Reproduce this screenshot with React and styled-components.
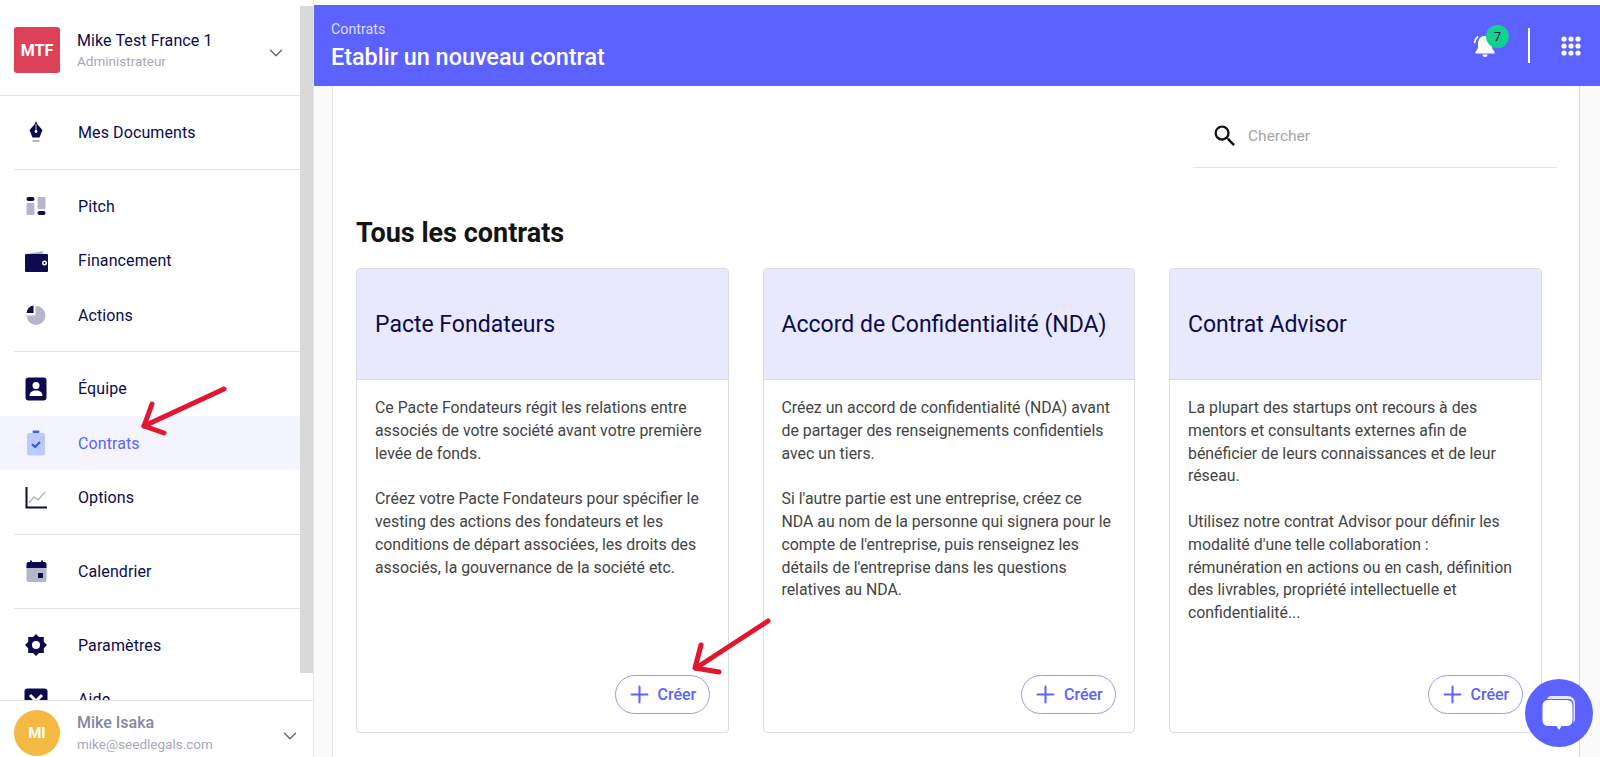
import React from "react";
import styled, { createGlobalStyle } from "styled-components";
import { ChevronDown, Plus } from "lucide-react";
import { MdSearch } from "react-icons/md";

const Global = createGlobalStyle`
  html, body { margin: 0; padding: 0; height: 100%; overflow: hidden; background: #fff; }
  body { font-family: Roboto, "Liberation Sans", sans-serif; }
  #root { height: 100%; }
  * { box-sizing: border-box; }
`;

const navy = "#0b0b4d";
const brand = "#5c62ff";

/* page */
const Page = styled.div`
  position: relative;
  display: flex;
  width: 1600px;
  height: 757px;
  overflow: hidden;
`;

/* sidebar */
const Sidebar = styled.aside`
  width: 314px;
  flex: none;
  height: 757px;
  display: flex;
  flex-direction: column;
  border-right: 1px solid #e6e6e6;
`;
const SideBody = styled.div`
  flex: 1;
  min-height: 0;
  display: flex;
  overflow: hidden;
`;
const SideMenu = styled.div`
  width: 300px;
  flex: none;
`;
const ScrollTrack = styled.div`
  width: 13px;
  flex: none;
  padding-top: 6px;
`;
const ScrollThumb = styled.div`
  height: 667px;
  background: #d9d9d9;
`;
const Account = styled.div`
  height: 96px;
  display: flex;
  align-items: center;
  padding: 5px 13px 0 14px;
  border-bottom: 1px solid #e4e4e8;
`;
const CompanyLogo = styled.div`
  width: 46px;
  height: 46px;
  flex: none;
  margin-right: 17px;
  border-radius: 3px;
  background: #dc4157;
  color: #fff;
  font-size: 16px;
  font-weight: 700;
  display: flex;
  align-items: center;
  justify-content: center;
`;
const AccountText = styled.div`
  flex: 1;
  min-width: 0;
`;
const AccountName = styled.div`
  margin-top: 2px;
  font-size: 16px;
  line-height: 20px;
  letter-spacing: 0.1px;
  color: ${navy};
`;
const AccountRole = styled.div`
  font-size: 13.5px;
  line-height: 20px;
  color: #a6a8ba;
`;
const Caret = styled(ChevronDown)`
  flex: none;
  margin-top: 6px;
`;
const Group = styled.div`
  margin-left: 14px;
  padding: 9.1px 0;
  border-bottom: ${(p) => (p.$last ? "none" : "1px solid #e2e2e6")};
`;
const Row = styled.div`
  height: 54.5px;
  margin-left: -14px;
  padding-left: 24px;
  display: flex;
  align-items: center;
  background: ${(p) => (p.$active ? "#f4f4fe" : "transparent")};
`;
const RowIcon = styled.span`
  width: 24px;
  height: 24px;
  flex: none;
  margin-right: 30px;
  display: flex;
  align-items: center;
  justify-content: center;
`;
const RowLabel = styled.span`
  font-size: 16px;
  letter-spacing: 0.1px;
  color: ${(p) => (p.$active ? brand : navy)};
`;
const Footer = styled.div`
  height: 57px;
  flex: none;
  display: flex;
  align-items: center;
  padding: 8px 12px 0 14px;
  background: #fff;
  border-top: 1px solid #e4e4e8;
`;
const Avatar = styled.div`
  width: 46px;
  height: 46px;
  flex: none;
  margin-right: 17px;
  border-radius: 50%;
  background: #f4b942;
  color: #fff;
  font-size: 15px;
  font-weight: 700;
  display: flex;
  align-items: center;
  justify-content: center;
`;
const UserName = styled.div`
  margin-top: 1px;
  font-size: 16px;
  line-height: 20px;
  font-weight: 500;
  color: #85879f;
`;
const UserMail = styled.div`
  font-size: 13.5px;
  line-height: 20px;
  margin-top: 1px;
  color: #a6a8ba;
`;

/* main */
const Main = styled.main`
  flex: 1;
  min-width: 0;
  padding-top: 5px;
  display: flex;
  flex-direction: column;
  background: #fafafa;
`;
const Header = styled.header`
  height: 81px;
  flex: none;
  display: flex;
  align-items: center;
  justify-content: space-between;
  padding: 0 19px 0 17px;
  background: ${brand};
  color: #fff;
`;
const Crumb = styled.div`
  font-size: 14.3px;
  line-height: 18px;
  color: #dcdcff;
`;
const PageTitle = styled.div`
  margin-top: 5px;
  font-size: 23.4px;
  line-height: 28px;
  font-weight: 500;
`;
const HeaderActions = styled.div`
  display: flex;
  align-items: center;
`;
const Bell = styled.div`
  position: relative;
  width: 26px;
  height: 26px;
`;
const Badge = styled.span`
  position: absolute;
  top: -8px;
  left: 14px;
  width: 23px;
  height: 23px;
  border-radius: 50%;
  background: #12d18e;
  color: #12124a;
  font-size: 12.5px;
  display: flex;
  align-items: center;
  justify-content: center;
`;
const HeaderRule = styled.div`
  width: 2px;
  height: 35px;
  margin: 0 31px 0 30px;
  background: #fff;
`;
const Panel = styled.div`
  flex: 1;
  min-height: 0;
  margin: 0 20px 0 18px;
  padding: 0 37px 0 23px;
  background: #fff;
  border-left: 1px solid #e2e2e2;
  border-right: 1px solid #d8d8d8;
`;
const SearchRow = styled.div`
  display: flex;
  justify-content: flex-end;
  margin-right: -15px;
`;
const SearchBox = styled.div`
  width: 364px;
  height: 82px;
  padding: 18px 0 0 18px;
  display: flex;
  align-items: center;
  gap: 9px;
  border-bottom: 1px solid #e4e4e4;
  color: #a6a6a6;
  font-size: 15.5px;
`;
const Heading = styled.h1`
  margin: 49px 0 18px;
  font-size: 27px;
  line-height: 33px;
  font-weight: 700;
  color: #141414;
`;
const Cards = styled.div`
  display: grid;
  grid-template-columns: repeat(3, 372.5px);
  column-gap: 34px;
`;
const Card = styled.article`
  height: 465px;
  display: flex;
  flex-direction: column;
  border: 1px solid #dcdce4;
  border-radius: 4px;
  overflow: hidden;
`;
const CardHead = styled.div`
  height: 111px;
  flex: none;
  display: flex;
  align-items: center;
  padding: 0 18px;
  background: #e9e9fd;
  border-bottom: 1px solid #d9d9ee;
  color: ${navy};
  font-size: 23px;
`;
const CardBody = styled.div`
  flex: 1;
  padding: 17px 21px 0 18px;
  color: #444;
  font-size: 15.85px;
  line-height: 22.8px;
`;
const Para = styled.p`
  margin: 0 0 22.8px;
`;
const CardFoot = styled.div`
  display: flex;
  justify-content: flex-end;
  padding: 0 18px 18px;
`;
const CreateButton = styled.button`
  height: 39px;
  width: 95px;
  padding: 0 0 0 10px;
  display: flex;
  align-items: center;
  gap: 5px;
  border: 1px solid #9a9cec;
  border-radius: 20px;
  background: #fff;
  color: ${brand};
  font-family: inherit;
  font-size: 16px;
  font-weight: 500;
`;

/* overlays */
const Arrow = styled.svg`
  position: absolute;
  left: 0;
  top: 0;
  pointer-events: none;
`;
const ChatBubble = styled.div`
  position: absolute;
  left: 1525px;
  top: 679px;
  width: 68px;
  height: 68px;
  border-radius: 50%;
  background: ${brand};
  display: flex;
  align-items: center;
  justify-content: center;
`;

/* icons */
const PenIcon = () => (
  <svg width="16" height="24" viewBox="0 0 16 24">
    <path d="M8 1l1.500 3.500 5 5.500-3 7.500H4.500l-3-7.500 5-5.500z" fill={navy} />
    <circle cx="8" cy="11.500" r="1.400" fill="#fff" />
    <path d="M8 4v7" stroke="#fff" strokeWidth=".8" />
    <rect x="4.500" y="20" width="7" height="2" fill="#b4b6c9" />
  </svg>
);
const PitchIcon = () => (
  <svg width="20" height="20" viewBox="0 0 20 20">
    <rect x="0.500" y="1" width="8" height="4" rx="2" fill={navy} />
    <rect x="0.500" y="7" width="8" height="12" rx="1" fill="#b4b6c9" />
    <rect x="11.500" y="1" width="8" height="12" rx="1" fill="#b4b6c9" />
    <rect x="11.500" y="15" width="8" height="4" rx="2" fill={navy} />
  </svg>
);
const WalletIcon = () => (
  <svg width="24" height="24" viewBox="0 0 24 24">
    <path d="M3 5l16-3v3z" fill="#b4b6c9" />
    <path d="M1 6a1 1 0 0 1 1-1h21a1 1 0 0 1 1 1v16a1 1 0 0 1-1 1H2a1 1 0 0 1-1-1z" fill={navy} />
    <circle cx="20.500" cy="14" r="2.500" fill="#fff" />
    <circle cx="20.500" cy="14" r="1" fill={navy} />
  </svg>
);
const PieIcon = () => (
  <svg width="20" height="20" viewBox="0 0 20 20">
    <path d="M9 1a9.500 9.500 0 1 1-8.500 9.500H9.500V1z" fill="#b4b6c9" />
    <path d="M7.500 0.500V8H0.500A8 8 0 0 1 7.500 0.500z" fill={navy} />
  </svg>
);
const TeamIcon = () => (
  <svg width="22" height="24" viewBox="0 0 22 24">
    <rect x="0.500" y="0.500" width="21" height="23" rx="3" fill={navy} />
    <circle cx="11" cy="8.500" r="3.500" fill="#fff" />
    <path d="M4.500 19c0-4 3-5.500 6.500-5.500s6.500 1.500 6.500 5.500z" fill="#fff" />
  </svg>
);
const ClipboardIcon = () => (
  <svg width="20" height="26" viewBox="0 0 20 26">
    <rect x="1" y="3" width="18" height="22.500" rx="2" fill="#bccbff" />
    <rect x="6.500" y="0.500" width="7" height="2.500" rx="1" fill="#3f5ff0" />
    <path d="M6 14l3 3 5-5" fill="none" stroke="#3050e8" strokeWidth="2" />
  </svg>
);
const ChartIcon = () => (
  <svg width="22" height="22" viewBox="0 0 22 22">
    <path d="M1.500 0v20.500H22" fill="none" stroke={navy} strokeWidth="2" />
    <path d="M4 16l5-6 4 3 7-8" fill="none" stroke="#b4b6c9" strokeWidth="1.500" />
  </svg>
);
const CalendarIcon = () => (
  <svg width="21" height="22" viewBox="0 0 21 22">
    <rect x="0.500" y="4" width="20" height="18" rx="2" fill="#b4b6c9" />
    <path d="M0.500 8V4a2 2 0 0 1 2-2h16a2 2 0 0 1 2 2v4z" fill={navy} />
    <rect x="4" y="0.500" width="2" height="3" fill={navy} />
    <rect x="15" y="0.500" width="2" height="3" fill={navy} />
    <rect x="12" y="13" width="5" height="5" rx="0.500" fill={navy} />
  </svg>
);
const GearIcon = () => (
  <svg width="22" height="22" viewBox="0 0 22 22">
    <path
      d="M11 0l3 3h4.800v4.800L22 11l-3.200 3.200V19H14l-3 3-3-3H3.200v-4.800L0 11l3.200-3.200V3H8z"
      fill={navy}
    />
    <circle cx="11" cy="11" r="4" fill="#fff" />
  </svg>
);
const HelpIcon = () => (
  <svg width="24" height="24" viewBox="0 0 24 24">
    <rect x="0.500" y="0.500" width="23" height="23" rx="3" fill={navy} />
    <path d="M6 7l6 6 6-6" fill="none" stroke="#fff" strokeWidth="3" />
  </svg>
);
const BellIcon = () => (
  <svg width="26" height="26" viewBox="0 0 26 26">
    <path
      d="M13 3c-4.500 0-7 3.500-7 7.500v4.500L3.500 19v1.500h19V19L20 15v-4.500C20 6.500 17.500 3 13 3z"
      fill="#fff"
    />
    <path d="M10.500 21.500h5a2.500 2.500 0 0 1-5 0z" fill="#fff" />
    <path d="M2.500 10C3 7 4 5 6 3.500" fill="none" stroke="#fff" strokeWidth="1.600" />
  </svg>
);
const GridIcon = () => (
  <svg width="20" height="20" viewBox="0 0 20 20" fill="#fff">
    {[3, 10, 17].map((y) =>
      [3, 10, 17].map((x) => <circle key={`${x}-${y}`} cx={x} cy={y} r="2.600" />)
    )}
  </svg>
);
const ChatIcon = () => (
  <svg width="34" height="36" viewBox="0 0 34 36">
    <path
      d="M8 1h18a7 7 0 0 1 7 7v16a6 6 0 0 1-1.500 4V9a5 5 0 0 0-5-5H5a7 7 0 0 1 3-3z"
      fill="#fff"
      opacity=".85"
    />
    <path
      d="M6 5h19a5.500 5.500 0 0 1 5.500 5.500v15A5.500 5.500 0 0 1 25 31h-5.500L17 35l-2.500-4H6a5.500 5.500 0 0 1-5.500-5.500v-15A5.500 5.500 0 0 1 6 5z"
      fill="#fff"
    />
  </svg>
);

const menu = [
  [{ label: "Mes Documents", icon: <PenIcon /> }],
  [
    { label: "Pitch", icon: <PitchIcon /> },
    { label: "Financement", icon: <WalletIcon /> },
    { label: "Actions", icon: <PieIcon /> },
  ],
  [
    { label: "Équipe", icon: <TeamIcon /> },
    { label: "Contrats", icon: <ClipboardIcon />, active: true },
    { label: "Options", icon: <ChartIcon /> },
  ],
  [{ label: "Calendrier", icon: <CalendarIcon /> }],
  [
    { label: "Paramètres", icon: <GearIcon /> },
    { label: "Aide", icon: <HelpIcon /> },
  ],
];

const contracts = [
  {
    title: "Pacte Fondateurs",
    paragraphs: [
      "Ce Pacte Fondateurs régit les relations entre associés de votre société avant votre première levée de fonds.",
      "Créez votre Pacte Fondateurs pour spécifier le vesting des actions des fondateurs et les conditions de départ associées, les droits des associés, la gouvernance de la société etc.",
    ],
  },
  {
    title: "Accord de Confidentialité (NDA)",
    paragraphs: [
      "Créez un accord de confidentialité (NDA) avant de partager des renseignements confidentiels avec un tiers.",
      "Si l'autre partie est une entreprise, créez ce NDA au nom de la personne qui signera pour le compte de l'entreprise, puis renseignez les détails de l'entreprise dans les questions relatives au NDA.",
    ],
  },
  {
    title: "Contrat Advisor",
    paragraphs: [
      "La plupart des startups ont recours à des mentors et consultants externes afin de bénéficier de leurs connaissances et de leur réseau.",
      "Utilisez notre contrat Advisor pour définir les modalité d'une telle collaboration : rémunération en actions ou en cash, définition des livrables, propriété intellectuelle et confidentialité...",
    ],
  },
];

export default function App() {
  return (
    <Page>
      <Global />
      <Sidebar>
        <SideBody>
          <SideMenu>
            <Account>
              <CompanyLogo>MTF</CompanyLogo>
              <AccountText>
                <AccountName>Mike Test France 1</AccountName>
                <AccountRole>Administrateur</AccountRole>
              </AccountText>
              <Caret size={22} color="#666" strokeWidth={1.5} />
            </Account>
            {menu.map((group, i) => (
              <Group key={i} $last={i === menu.length - 1}>
                {group.map((item) => (
                  <Row key={item.label} $active={item.active}>
                    <RowIcon>{item.icon}</RowIcon>
                    <RowLabel $active={item.active}>{item.label}</RowLabel>
                  </Row>
                ))}
              </Group>
            ))}
          </SideMenu>
          <ScrollTrack>
            <ScrollThumb />
          </ScrollTrack>
        </SideBody>
        <Footer>
          <Avatar>MI</Avatar>
          <AccountText>
            <UserName>Mike Isaka</UserName>
            <UserMail>mike@seedlegals.com</UserMail>
          </AccountText>
          <Caret size={22} color="#666" strokeWidth={1.5} />
        </Footer>
      </Sidebar>
      <Main>
        <Header>
          <div>
            <Crumb>Contrats</Crumb>
            <PageTitle>Etablir un nouveau contrat</PageTitle>
          </div>
          <HeaderActions>
            <Bell>
              <BellIcon />
              <Badge>7</Badge>
            </Bell>
            <HeaderRule />
            <GridIcon />
          </HeaderActions>
        </Header>
        <Panel>
          <SearchRow>
            <SearchBox>
              <MdSearch size={28} color="#111" />
              Chercher
            </SearchBox>
          </SearchRow>
          <Heading>Tous les contrats</Heading>
          <Cards>
            {contracts.map((c) => (
              <Card key={c.title}>
                <CardHead>{c.title}</CardHead>
                <CardBody>
                  {c.paragraphs.map((p) => (
                    <Para key={p}>{p}</Para>
                  ))}
                </CardBody>
                <CardFoot>
                  <CreateButton>
                    <Plus size={27} strokeWidth={1.8} />
                    Créer
                  </CreateButton>
                </CardFoot>
              </Card>
            ))}
          </Cards>
        </Panel>
      </Main>
      <Arrow width="1600" height="757" viewBox="0 0 1600 757">
        <g fill="none" stroke="#e0172f" strokeWidth="5" strokeLinecap="round" strokeLinejoin="round">
          <path d="M224 389L144 426" />
          <path d="M152 404L144 426 164 433" />
          <path d="M768 621L696 668" />
          <path d="M701 645L695 668 719 672" />
        </g>
      </Arrow>
      <ChatBubble>
        <ChatIcon />
      </ChatBubble>
    </Page>
  );
}
